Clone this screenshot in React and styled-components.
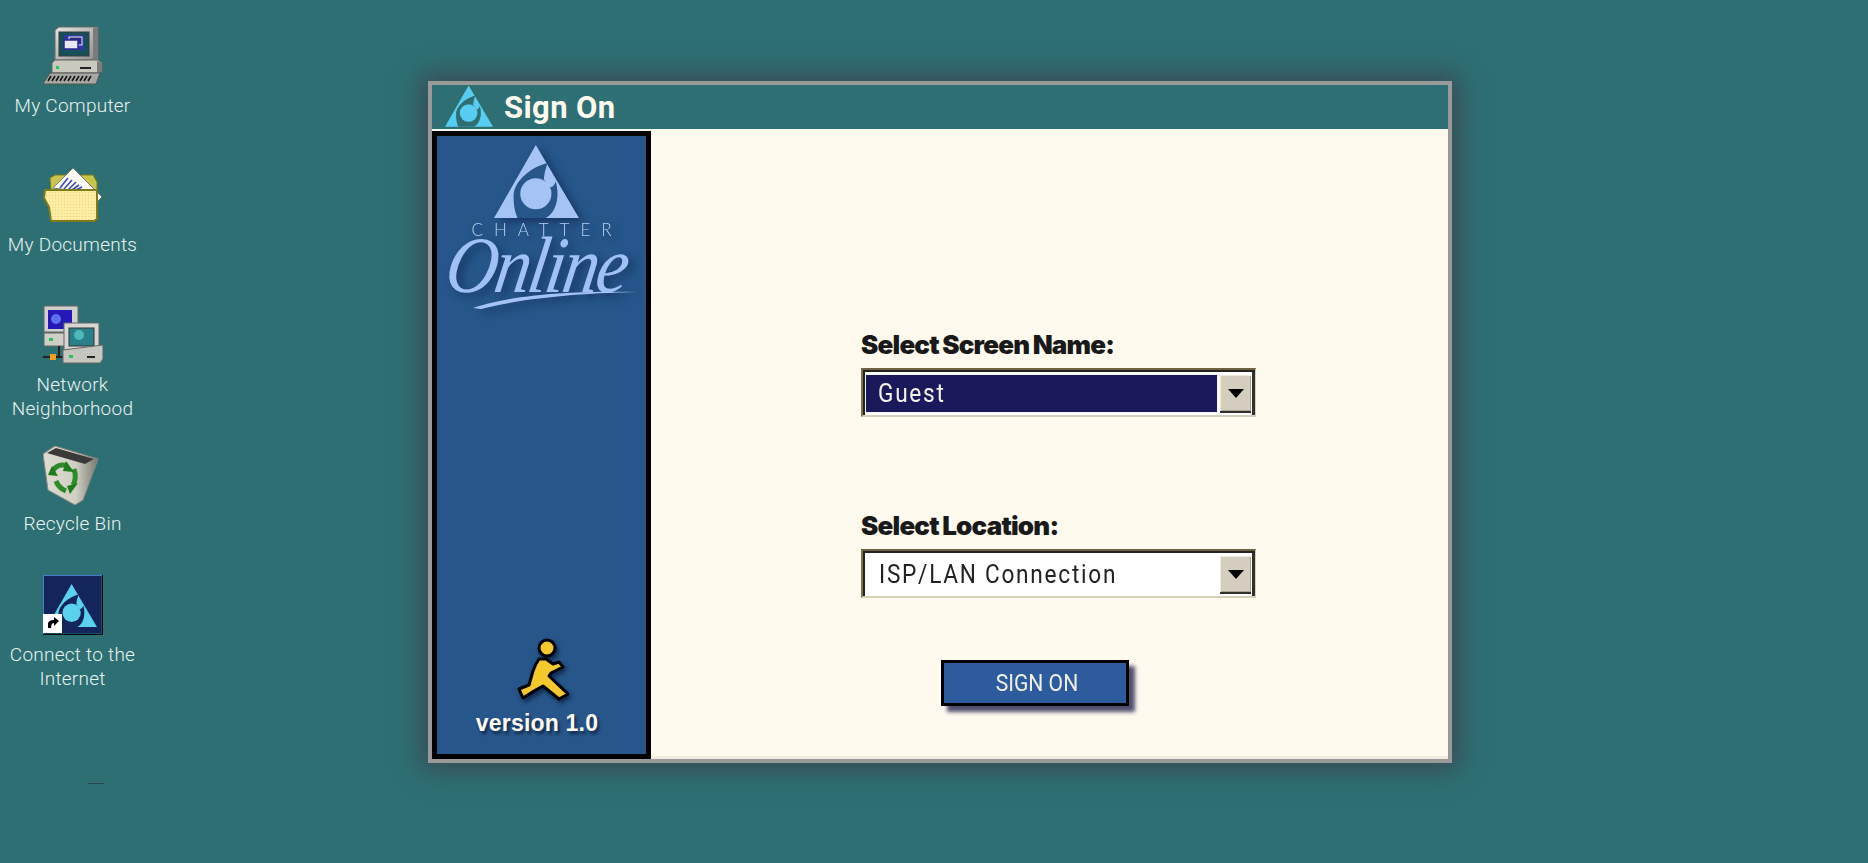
import React from 'react'
import styled, { createGlobalStyle } from 'styled-components'

const GlobalStyle = createGlobalStyle`
    html, body {
        margin: 0;
        height: 100%;
        background: #2e6f73;
    }
    #root {
        height: 100%;
    }
`

const Desktop = styled.main`
    width: 100%;
    height: 863px;
    overflow: hidden;
    display: flex;
    align-items: flex-start;
    background: #2e6f73;
`
const IconColumn = styled.nav`
    width: 145px;
    flex: none;
    padding-top: 25px;
    display: flex;
    flex-direction: column;
`
const DesktopItem = styled.div`
    height: ${p => p.$height}px;
    display: flex;
    flex-direction: column;
    align-items: center;
`
const IconLabel = styled.span`
    margin-top: ${p => p.$gap}px;
    font-family: 'Roboto', sans-serif;
    font-weight: 300;
    font-size: 19px;
    line-height: 24px;
    letter-spacing: 0.25px;
    color: #e6f3ef;
    text-align: center;
    white-space: nowrap;
`
const Smudge = styled.i`
    display: block;
    width: 16px;
    height: 1px;
    margin: 11px 0 0 88px;
    background: #24474a;
`
const Window = styled.section`
    width: 1024px;
    height: 682px;
    margin: 81px 0 0 283px;
    box-sizing: border-box;
    border: 4px solid #9a9a9a;
    display: flex;
    flex-direction: column;
    background: #fffaee;
    box-shadow: 0 0 24px 6px rgba(62, 62, 72, 0.75);
`
const TitleBar = styled.header`
    height: 44px;
    flex: none;
    padding-left: 13px;
    display: flex;
    align-items: flex-end;
    gap: 11px;
    background: #2e6f73;
    h1 {
        margin: 0 0 3px;
        font-family: 'Roboto', sans-serif;
        font-weight: 700;
        font-size: 31px;
        line-height: 36px;
        letter-spacing: 0.4px;
        color: #fffaee;
    }
`
const TitleMark = styled.div`
    line-height: 0;
    margin-bottom: 2px;
`
const Body = styled.div`
    flex: 1;
    min-height: 0;
    display: flex;
`
const Sidebar = styled.aside`
    width: 219px;
    flex: none;
    margin-top: 2px;
    box-sizing: border-box;
    border: 5px solid #000;
    background: #26568a;
    padding: 9px 0 18px;
    display: flex;
    flex-direction: column;
    align-items: center;
`
const Brand = styled.div`
    width: 100%;
    display: flex;
    flex-direction: column;
    align-items: center;
    filter: drop-shadow(5px 4px 4px rgba(18, 48, 90, 0.8));
`
const LogoMark = styled.div`
    line-height: 0;
    margin-right: 10px;
`
const Chatter = styled.span`
    margin-top: 2px;
    padding-left: 11px;
    font-family: 'Lato', sans-serif;
    font-weight: 300;
    font-size: 17px;
    line-height: 20px;
    letter-spacing: 11px;
    color: #b9cfee;
`
const Script = styled.span`
    margin: -5px 10px 0 0;
    font-family: 'Liberation Serif', serif;
    font-style: italic;
    font-size: 80px;
    line-height: 60px;
    letter-spacing: -3px;
    color: #a0c1f6;
    transform: scaleX(0.9) skewX(-10deg);
`
const Swoosh = styled.svg`
    display: block;
    margin-top: -8px;
    margin-left: 27px;
`
const SidebarFoot = styled.div`
    margin-top: auto;
    margin-right: 9px;
    display: flex;
    flex-direction: column;
    align-items: center;
    gap: 8px;
`
const RunnerArt = styled.svg`
    display: block;
    margin-left: 13px;
    filter: drop-shadow(2px 3px 2px #10294d);
`
const Version = styled.span`
    font-family: 'Liberation Sans', sans-serif;
    font-weight: 700;
    font-size: 23px;
    line-height: 26px;
    letter-spacing: 0.2px;
    color: #fffaee;
    text-shadow: 2px 3px 3px #10294d;
`
const Main = styled.form`
    flex: 1;
    padding: 201px 0 0 210px;
    display: flex;
    flex-direction: column;
    align-items: flex-start;
    border-bottom: 3px solid #f1ece0;
`
const FieldLabel = styled.label`
    font-family: 'Inter', sans-serif;
    font-weight: 900;
    font-size: 26px;
    line-height: 30px;
    letter-spacing: -0.8px;
    word-spacing: -1px;
    color: #191919;
    margin-top: ${p => p.$top || 0}px;
`
const SelectBox = styled.div`
    width: 395px;
    height: 49px;
    margin-top: 8px;
    box-sizing: border-box;
    flex: none;
    display: flex;
    align-items: stretch;
    padding: 3px 4px 3px 3px;
    background: #fff;
    border-top: 2px solid #6f6240;
    border-left: 2px solid #7d6f49;
    border-right: 1px solid #d6cfba;
    border-bottom: 2px solid #d6cfba;
    box-shadow: inset 2px 2px 0 #23231f, inset -3px 0 0 #33312a;
`
const SelectValue = styled.div`
    flex: 1;
    min-width: 0;
    padding-left: ${p => (p.$selected ? 12 : 13)}px;
    padding-bottom: ${p => (p.$selected ? 2 : 0)}px;
    display: flex;
    align-items: center;
    font-family: 'Roboto', sans-serif;
    font-weight: 400;
    font-size: 26px;
    letter-spacing: 2px;
    white-space: nowrap;
    color: ${p => (p.$selected ? '#f4f1e6' : '#222')};
    background: ${p => (p.$selected ? '#19195c' : '#fff')};
    outline: ${p => (p.$selected ? '1px solid #f4f4ff' : 'none')};
    margin: ${p => (p.$selected ? '2px 3px 0 0' : '0')};
    span {
        display: inline-block;
        transform: scaleX(0.87);
        transform-origin: left center;
    }
`
const ArrowButton = styled.div`
    width: 31px;
    flex: none;
    display: flex;
    align-items: center;
    justify-content: center;
    background: #d3cebd;
    box-shadow: inset 1px 1px 0 #efeadb, inset -1px -1px 0 #aaa493, 0 2px 0 #33312a;
    margin: 2px 0 1px;
`
const Arrow = styled.i`
    width: 0;
    height: 0;
    border-left: 8px solid transparent;
    border-right: 8px solid transparent;
    border-top: 9px solid #000;
`
const SignOnButton = styled.button`
    width: 188px;
    height: 46px;
    margin: 62px 0 0 80px;
    box-sizing: border-box;
    border: 3px solid #000;
    background: #2c5c9e;
    color: #f2efe4;
    font-family: 'Roboto', sans-serif;
    font-size: 24px;
    font-weight: 400;
    padding: 0 0 0 3px;
    box-shadow: 6px 6px 4px #50506e;
    span {
        display: inline-block;
        transform: scaleX(0.88);
    }
`

// triangle logo, the swirl is painted with the colour behind it
const TriangleLogo = ({ width, height, color, bg }) => (
    <svg width={width} height={height} viewBox="0 0 256 220">
        <polygon points="126,0 256,220 0,220" fill={color} />
        <path
            d="M161 55C120 62 62 105 59 150C58 180 63 203 71 220L156 220C185 205 200 160 186 110C182 122 176 128 168 128L150 103C152 85 156 70 161 55Z"
            fill={bg}
        />
        <circle cx="126" cy="147" r="47" fill={color} />
    </svg>
)

const ComputerIcon = () => (
    <svg width="60" height="60" viewBox="0 0 60 60">
        <defs>
            <linearGradient id="caseShade" x1="0" y1="0" x2="1" y2="1">
                <stop offset="0" stopColor="#e4e4e0" />
                <stop offset="1" stopColor="#8d8d8d" />
            </linearGradient>
        </defs>
        <polygon points="12,5 16,2 55,2 55,35 12,35" fill="url(#caseShade)" stroke="#666" />
        <polygon points="50,3 55,2 55,35 50,35" fill="#7b7b7b" />
        <rect x="16" y="7" width="30" height="24" fill="#174f57" stroke="#3a3a3a" />
        <rect x="21" y="10" width="20" height="15" fill="#3236a0" />
        <rect x="26" y="12" width="13" height="8" fill="#2a2a80" stroke="#eee" strokeWidth="1" />
        <rect x="21" y="15" width="14" height="9" fill="#e8e8f4" stroke="#2a2a90" strokeWidth="1.5" />
        <polygon points="9,38 12,35 55,35 59,38 59,46 56,48 9,48" fill="#c9c9bd" stroke="#666" />
        <polygon points="54,36 59,38 59,46 54,48" fill="#7c7c7c" />
        <rect x="13" y="41" width="3" height="3" fill="#2bc45a" />
        <rect x="37" y="42" width="11" height="2" fill="#222" />
        <polygon points="7,48 57,48 53,59 0,59" fill="#a7a7a3" stroke="#555" />
        <path d="M8 51L5 56M12 51L9 56M16 51L13 56M20 51L17 56M24 51L21 56M28 51L25 56M32 51L29 56M36 51L33 56M40 51L37 56M44 51L41 56M48 51L45 56" stroke="#111" strokeWidth="1.5" />
    </svg>
)

const DocumentsIcon = () => (
    <svg width="60" height="60" viewBox="0 0 60 60">
        <defs>
            <pattern id="folderDots" width="3" height="3" patternUnits="userSpaceOnUse">
                <rect width="3" height="3" fill="#fbee9f" />
                <rect width="1" height="1" fill="#f3c9a0" />
            </pattern>
        </defs>
        <path d="M7 13L12 10H50L54 17V50H10Z" fill="#c9c54c" stroke="#7c7a20" />
        <polygon points="10,23 30,3 59,32 55,36 33,26" fill="#fbfbf6" stroke="#7b7b7b" />
        <path d="M17 23L25 13M21 24L29 15M25 25L33 17M29 25L36 20M33 25L39 22" stroke="#4149b4" strokeWidth="1.6" />
        <path d="M2 25H54V54L51 56H8L6 42L1 33Z" fill="url(#folderDots)" stroke="#7d7b1d" strokeWidth="2" />
    </svg>
)

const NetworkIcon = () => (
    <svg width="60" height="60" viewBox="0 0 60 60">
        <rect x="1" y="1" width="34" height="26" fill="#d0d0cc" stroke="#666" />
        <rect x="5" y="5" width="24" height="19" fill="#2418b8" />
        <circle cx="13" cy="14" r="5" fill="#5a70f0" />
        <rect x="1" y="28" width="26" height="13" fill="#cfcfc8" stroke="#666" />
        <rect x="6" y="33" width="4" height="3" fill="#2bc45a" />
        <path d="M16 41V52M0 52H22" stroke="#222" strokeWidth="2" />
        <rect x="7" y="49" width="6" height="6" fill="#f0a020" />
        <rect x="21" y="18" width="35" height="27" fill="#d6d6d2" stroke="#666" />
        <rect x="26" y="23" width="25" height="18" fill="#2a8088" stroke="#333" />
        <circle cx="36" cy="30" r="5" fill="#4fb8b8" />
        <polygon points="20,45 60,40 60,54 57,58 20,58" fill="#c6c6c0" stroke="#666" />
        <rect x="26" y="50" width="4" height="3" fill="#2bc45a" />
        <rect x="44" y="51" width="8" height="2" fill="#222" />
    </svg>
)

const RecycleIcon = () => (
    <svg width="60" height="60" viewBox="0 -2 60 60">
        <defs>
            <linearGradient id="binShade" x1="0" y1="0" x2="1" y2="0">
                <stop offset="0" stopColor="#dcdcd0" />
                <stop offset="0.6" stopColor="#cfcfc4" />
                <stop offset="1" stopColor="#77776f" />
            </linearGradient>
        </defs>
        <polygon points="0,7 12,-1 55,12 40,53 32,58 5,43" fill="url(#binShade)" stroke="#8a8a80" />
        <polygon points="4,6 13,1 51,12 42,17" fill="#3a3a3a" />
        <path d="M9 25C13 18 19 17 24 19M31 22C33 28 33 33 30 38M23 44C18 42 15 39 13 34" fill="none" stroke="#2f8a2a" strokeWidth="5" />
        <polygon points="5,28 15,29 9,19" fill="#1d7a1d" />
        <polygon points="23,14 31,25 20,24" fill="#1d7a1d" />
        <polygon points="35,36 27,47 24,39" fill="#1d7a1d" />
    </svg>
)

const ConnectIcon = () => (
    <svg width="60" height="60" viewBox="0 0 60 60">
        <rect x="0.5" y="0.5" width="58" height="58" fill="#13255a" />
        <path d="M0 .5H59" stroke="#4a7ad0" />
        <path d="M.5 0V59" stroke="#4a7ad0" />
        <path d="M0 59.5H60M59.5 0V60" stroke="#0a0a0a" />
        <g transform="translate(4 9)">
            <TriangleLogo width="50" height="43" color="#5ad2ee" bg="#13255a" />
        </g>
        <rect x="0" y="39" width="19" height="19" fill="#fff" />
        <path d="M5 53V49C5 46 8 45 11 45V42L16 46L11 51V48C9 48 8 50 8 53Z" fill="#000" />
    </svg>
)

const Runner = () => (
    <RunnerArt width="52" height="64" viewBox="-1 -2 52 64">
        <g stroke="#000" strokeWidth="3" fill="#f4c92e" strokeLinejoin="round">
            <circle cx="29" cy="8" r="8" />
            <path d="M21 19L28 19L35 24L41 22L45 27L33 33L31 36L50 54L41 59L25 46L16 51L5 58L1 49L11 45L15 31L18 24Z" />
        </g>
    </RunnerArt>
)

const icons = [
    { key: 'computer', Icon: ComputerIcon, label: ['My Computer'], height: 140, gap: 9 },
    { key: 'documents', Icon: DocumentsIcon, label: ['My Documents'], height: 140, gap: 8 },
    { key: 'network', Icon: NetworkIcon, label: ['Network', 'Neighborhood'], height: 140, gap: 8 },
    { key: 'recycle', Icon: RecycleIcon, label: ['Recycle Bin'], height: 130, gap: 7 },
    { key: 'connect', Icon: ConnectIcon, label: ['Connect to the', 'Internet'], height: 197, gap: 8 },
]

const App = () => {
    return (
        <Desktop>
            <GlobalStyle />
            <IconColumn>
                {icons.map(({ key, Icon, label, height, gap }) => (
                    <DesktopItem key={key} $height={height}>
                        <Icon />
                        <IconLabel $gap={gap}>
                            {label.map(line => <div key={line}>{line}</div>)}
                        </IconLabel>
                    </DesktopItem>
                ))}
                <Smudge />
            </IconColumn>
            <Window>
                <TitleBar>
                    <TitleMark>
                        <TriangleLogo width="48" height="42" color="#58cdf2" bg="#2e6f73" />
                    </TitleMark>
                    <h1>Sign On</h1>
                </TitleBar>
                <Body>
                    <Sidebar>
                        <Brand>
                            <LogoMark>
                                <TriangleLogo width="85" height="73" color="#a5c4f6" bg="#26568a" />
                            </LogoMark>
                            <Chatter>CHATTER</Chatter>
                            <Script>Online</Script>
                            <Swoosh width="164" height="22" viewBox="0 0 164 22">
                                <path d="M0 21C30 10 90 3 164 5C110 6 50 11 8 22Z" fill="#a5c4f6" />
                            </Swoosh>
                        </Brand>
                        <SidebarFoot>
                            <Runner />
                            <Version>version 1.0</Version>
                        </SidebarFoot>
                    </Sidebar>
                    <Main>
                        <FieldLabel>Select Screen Name:</FieldLabel>
                        <SelectBox>
                            <SelectValue $selected><span>Guest</span></SelectValue>
                            <ArrowButton><Arrow /></ArrowButton>
                        </SelectBox>
                        <FieldLabel $top={94}>Select Location:</FieldLabel>
                        <SelectBox>
                            <SelectValue><span>ISP/LAN Connection</span></SelectValue>
                            <ArrowButton><Arrow /></ArrowButton>
                        </SelectBox>
                        <SignOnButton type="button"><span>SIGN ON</span></SignOnButton>
                    </Main>
                </Body>
            </Window>
        </Desktop>
    )
}

export default App
